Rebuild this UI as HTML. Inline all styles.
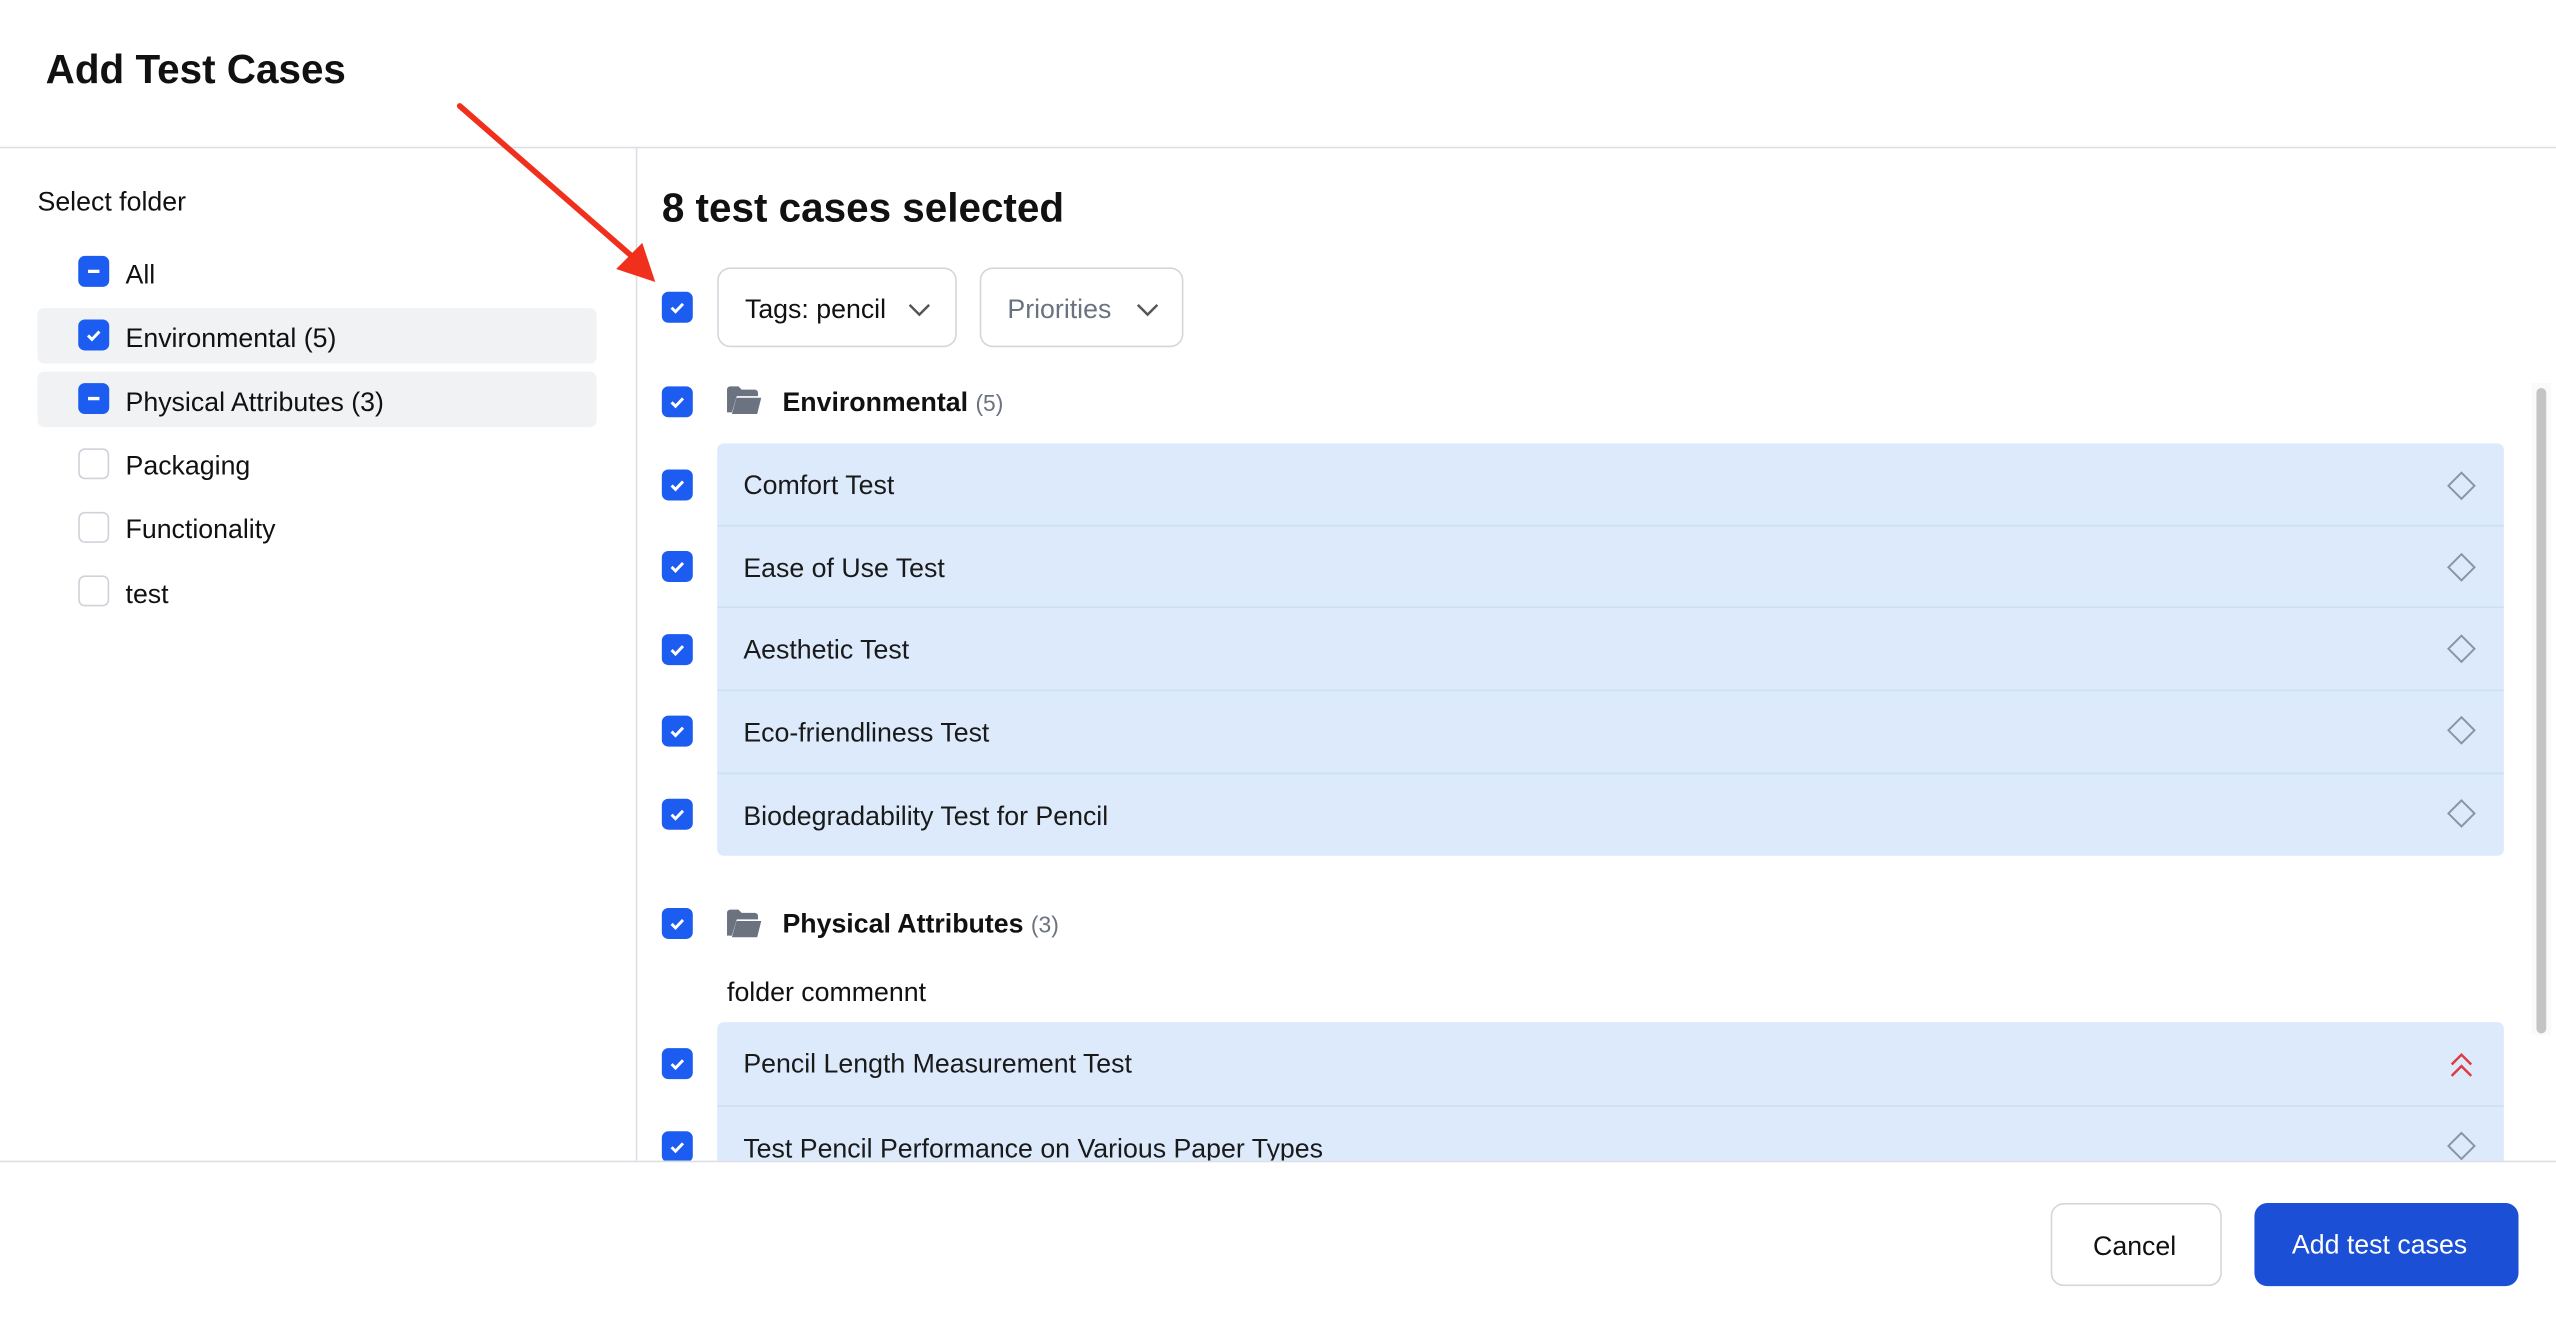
<!DOCTYPE html>
<html><head><meta charset="utf-8"><style>
*{box-sizing:border-box;margin:0;padding:0}
html,body{width:2556px;height:1320px;overflow:hidden;background:#fff}
#w{position:absolute;left:0;top:0;width:1568px;height:811px;transform:scale(1.63010);transform-origin:0 0;font-family:"Liberation Sans",sans-serif;color:#111;}
.a{position:absolute}
.cb{position:absolute;width:19px;height:19px;border-radius:4px;background:#1d5cf0;}
.cb.e{background:#fff;border:1px solid #cfd3d9}
.cb svg{position:absolute;left:0;top:0}
.t16{font-size:16.4px}
.row{position:absolute;left:0;width:1096px;height:50px;border-top:1px solid #cddff4;}
.row span{position:absolute;left:16px;top:17px;font-size:16.4px;color:#1a1a1a}
.btn{position:absolute;border:1px solid #d3d6db;border-radius:8px;background:#fff;font-size:16.4px}
</style></head><body><div id="w">
<div class="a" style="left:28px;top:30px;font-size:24.8px;font-weight:bold">Add Test Cases</div>
<div class="a" style="left:0;top:90px;width:1568px;height:1px;background:#dcdfe3"></div>
<div class="a" style="left:390px;top:91px;width:1px;height:621px;background:#dcdfe3"></div>
<div class="a t16" style="left:23px;top:115px">Select folder</div>
<div class="a" style="left:23px;top:189px;width:343px;height:34px;background:#f1f2f4;border-radius:4px"></div>
<div class="a" style="left:23px;top:228px;width:343px;height:34px;background:#f1f2f4;border-radius:4px"></div>
<div class="cb" style="left:48px;top:157px"><svg width="19" height="19"><path d="M6 9.5h7" stroke="#fff" stroke-width="2"/></svg></div>
<div class="a t16" style="left:77px;top:160px">All</div>
<div class="cb" style="left:48px;top:196px"><svg width="19" height="19"><path d="M6 9.8l2.4 2.4L13 7.4" stroke="#fff" stroke-width="1.8" fill="none"/></svg></div>
<div class="a t16" style="left:77px;top:199px">Environmental (5)</div>
<div class="cb" style="left:48px;top:235px"><svg width="19" height="19"><path d="M6 9.5h7" stroke="#fff" stroke-width="2"/></svg></div>
<div class="a t16" style="left:77px;top:238px">Physical Attributes (3)</div>
<div class="cb e" style="left:48px;top:275px"></div><div class="a t16" style="left:77px;top:277px">Packaging</div>
<div class="cb e" style="left:48px;top:314px"></div><div class="a t16" style="left:77px;top:316px">Functionality</div>
<div class="cb e" style="left:48px;top:353px"></div><div class="a t16" style="left:77px;top:356px">test</div>

<div class="a" style="left:406px;top:115px;font-size:24.8px;font-weight:bold">8 test cases selected</div>
<div class="cb" style="left:406px;top:179px"><svg width="19" height="19"><path d="M6 9.8l2.4 2.4L13 7.4" stroke="#fff" stroke-width="1.8" fill="none"/></svg></div>
<div class="btn" style="left:440px;top:164px;width:147px;height:49px"><span class="a" style="left:16px;top:16px">Tags: pencil</span><svg class="a" style="left:116px;top:20px" width="14" height="10"><path d="M1 2l6 6 6-6" stroke="#555" stroke-width="1.5" fill="none"/></svg></div>
<div class="btn" style="left:601px;top:164px;width:125px;height:49px"><span class="a" style="left:16px;top:16px;color:#6b7280">Priorities</span><svg class="a" style="left:95px;top:20px" width="14" height="10"><path d="M1 2l6 6 6-6" stroke="#555" stroke-width="1.5" fill="none"/></svg></div>

<div class="a" style="left:392px;top:226px;width:1176px;height:486px;overflow:hidden">
 <div class="a" style="left:1161px;top:9px;width:12px;height:400px;background:#fafafa"></div>
 <div class="a" style="left:1164px;top:12px;width:6px;height:396px;background:#c4c4c4;border-radius:3px"></div>
</div>
<div class="a" style="left:0;top:0;width:1552px;height:712px;overflow:hidden">
 <div class="cb" style="left:406px;top:237px"><svg width="19" height="19"><path d="M6 9.8l2.4 2.4L13 7.4" stroke="#fff" stroke-width="1.8" fill="none"/></svg></div>
 <svg class="a" style="left:445px;top:236px" width="23" height="19"><path d="M1 3a2 2 0 012-2h5l2 2h8a2 2 0 012 2v2H7L4 17H1z" fill="#6b7280"/><path d="M4 18l2.5-9a1 1 0 011-1H22l-2.5 10z" fill="#6b7280"/></svg>
 <div class="a t16" style="left:480px;top:238px;font-weight:bold">Environmental <span style="font-weight:normal;color:#6b7280;font-size:14px">(5)</span></div>
 <div class="a" style="left:440px;top:272px;width:1096px;height:253px;background:#dceafb;border-radius:4px;overflow:hidden">
  <div class="row" style="top:0;border:0"><span>Comfort Test</span></div>
  <div class="row" style="top:50px"><span>Ease of Use Test</span></div>
  <div class="row" style="top:100px"><span>Aesthetic Test</span></div>
  <div class="row" style="top:151px"><span>Eco-friendliness Test</span></div>
  <div class="row" style="top:202px"><span>Biodegradability Test for Pencil</span></div>
 </div>
 <div class="a" style="left:1500px;top:289px"><svg width="20" height="220"><g fill="none" stroke="#8a94a3" stroke-width="1.2"><path d="M10 1l8 8-8 8-8-8z"/><path d="M10 51l8 8-8 8-8-8z"/><path d="M10 101l8 8-8 8-8-8z"/><path d="M10 151l8 8-8 8-8-8z"/><path d="M10 202l8 8-8 8-8-8z"/></g></svg></div>
 <div class="cb" style="left:406px;top:288px"><svg width="19" height="19"><path d="M6 9.8l2.4 2.4L13 7.4" stroke="#fff" stroke-width="1.8" fill="none"/></svg></div>
 <div class="cb" style="left:406px;top:338px"><svg width="19" height="19"><path d="M6 9.8l2.4 2.4L13 7.4" stroke="#fff" stroke-width="1.8" fill="none"/></svg></div>
 <div class="cb" style="left:406px;top:389px"><svg width="19" height="19"><path d="M6 9.8l2.4 2.4L13 7.4" stroke="#fff" stroke-width="1.8" fill="none"/></svg></div>
 <div class="cb" style="left:406px;top:439px"><svg width="19" height="19"><path d="M6 9.8l2.4 2.4L13 7.4" stroke="#fff" stroke-width="1.8" fill="none"/></svg></div>
 <div class="cb" style="left:406px;top:490px"><svg width="19" height="19"><path d="M6 9.8l2.4 2.4L13 7.4" stroke="#fff" stroke-width="1.8" fill="none"/></svg></div>

 <div class="cb" style="left:406px;top:557px"><svg width="19" height="19"><path d="M6 9.8l2.4 2.4L13 7.4" stroke="#fff" stroke-width="1.8" fill="none"/></svg></div>
 <svg class="a" style="left:445px;top:557px" width="23" height="19"><path d="M1 3a2 2 0 012-2h5l2 2h8a2 2 0 012 2v2H7L4 17H1z" fill="#6b7280"/><path d="M4 18l2.5-9a1 1 0 011-1H22l-2.5 10z" fill="#6b7280"/></svg>
 <div class="a t16" style="left:480px;top:558px;font-weight:bold">Physical Attributes <span style="font-weight:normal;color:#6b7280;font-size:14px">(3)</span></div>
 <div class="a t16" style="left:446px;top:600px">folder commennt</div>
 <div class="a" style="left:440px;top:627px;width:1096px;height:120px;background:#dceafb;border-radius:4px;overflow:hidden">
  <div class="row" style="top:0;border:0"><span>Pencil Length Measurement Test</span></div>
  <div class="row" style="top:51px"><span>Test Pencil Performance on Various Paper Types</span></div>
 </div>
 <svg class="a" style="left:1502px;top:644px" width="16" height="18"><path d="M2 9l6-6 6 6M2 16l6-6 6 6" stroke="#e0393e" stroke-width="1.5" fill="none"/></svg>
 <svg class="a" style="left:1500px;top:694px" width="20" height="20"><path d="M10 1l8 8-8 8-8-8z" fill="none" stroke="#8a94a3" stroke-width="1.2"/></svg>
 <div class="cb" style="left:406px;top:643px"><svg width="19" height="19"><path d="M6 9.8l2.4 2.4L13 7.4" stroke="#fff" stroke-width="1.8" fill="none"/></svg></div>
 <div class="cb" style="left:406px;top:694px"><svg width="19" height="19"><path d="M6 9.8l2.4 2.4L13 7.4" stroke="#fff" stroke-width="1.8" fill="none"/></svg></div>
</div>

<div class="a" style="left:0;top:712px;width:1568px;height:1px;background:#dcdfe3"></div>
<div class="btn" style="left:1258px;top:738px;width:105px;height:51px"><span class="a" style="left:25px;top:17px">Cancel</span></div>
<div class="a" style="left:1383px;top:738px;width:162px;height:51px;background:#1a4fd6;border-radius:8px;color:#fff;font-size:16.4px"><span class="a" style="left:23px;top:17px">Add test cases</span></div>

<svg class="a" style="left:270px;top:55px" width="150" height="130"><path d="M12 10L122 106" stroke="#f0301c" stroke-width="3.5" stroke-linecap="round"/><path d="M108 110l24 8-8-24z" fill="#f0301c"/></svg>
</div></body></html>
